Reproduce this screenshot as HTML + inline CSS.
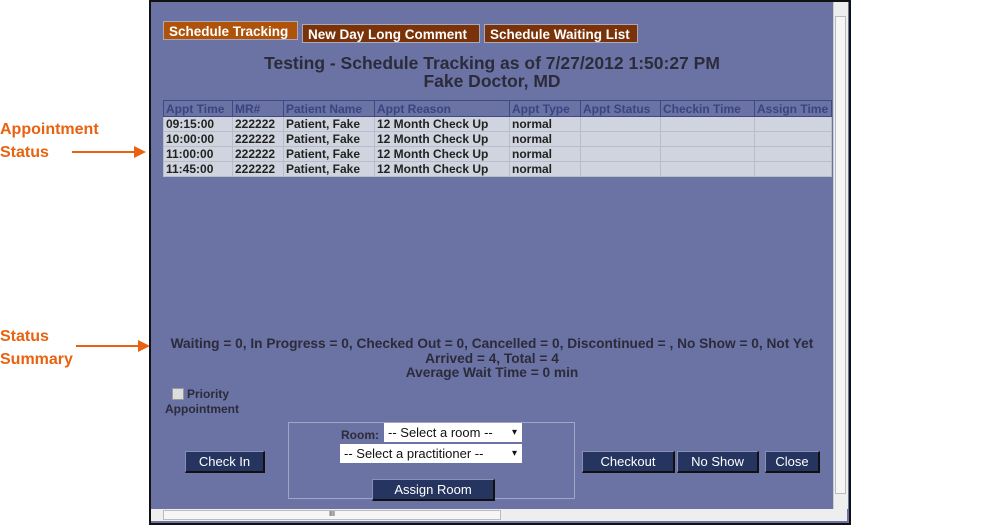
<html><head><style>
body{margin:0;width:1000px;height:525px;background:#fff;position:relative;overflow:hidden;font-family:"Liberation Sans",Arial,sans-serif}
.a{position:absolute}
.frame{left:149px;top:0;width:698px;height:521px;border:2px solid #111;background:#6b73a5;}
.lbl{color:#e8620f;font-size:16px;font-weight:bold;line-height:23px}
.tab{position:absolute;height:19px;color:#fff;font-weight:bold;font-size:13.5px;line-height:19px;padding:0 5px;border:1px solid #aab;box-sizing:border-box;white-space:nowrap}
table{border-collapse:collapse;font-size:12px;font-weight:bold}
td{border:1px solid #b8bccb;height:15px;padding:0 2px;color:#222;background:#d0d4de;white-space:nowrap}
th{border:1px solid #3e4a85;height:16px;padding:0 2px;color:#3a4480;background:#6b73a5;text-align:left;font-weight:bold;white-space:nowrap}
.btn{position:absolute;background:#26355f;color:#fff;font-size:13px;text-align:center;line-height:19px;height:19px;border-right:2px solid #111;border-bottom:2px solid #111;border-left:1px solid #8890b8;border-top:1px solid #8890b8}
.sel{position:absolute;background:#fff;font-size:13px;height:19px;line-height:19px;padding-left:4px;color:#111}
.sel:after{content:"▾";position:absolute;right:5px;font-size:10px}
</style></head><body>
<div class="a lbl" style="left:0;top:118px">Appointment<br>Status</div>
<div class="a" style="left:72px;top:151px;width:64px;height:2px;background:#e8620f"></div>
<div class="a" style="left:134px;top:146px;border-left:12px solid #e8620f;border-top:6px solid transparent;border-bottom:6px solid transparent"></div>
<div class="a lbl" style="left:0;top:325px">Status<br>Summary</div>
<div class="a" style="left:76px;top:345px;width:64px;height:2px;background:#e8620f"></div>
<div class="a" style="left:138px;top:340px;border-left:12px solid #e8620f;border-top:6px solid transparent;border-bottom:6px solid transparent"></div>
<div class="a frame"></div>
<div class="a" style="left:833px;top:2px;width:14px;height:507px;background:#eee;border-left:1px solid #ccc"></div>
<div class="a" style="left:835px;top:16px;width:11px;height:478px;background:#f6f6f6;border:1px solid #bbb;box-sizing:border-box"></div>
<div class="a" style="left:151px;top:509px;width:696px;height:12px;background:#eee"></div>
<div class="a" style="left:163px;top:510px;width:338px;height:10px;background:#f6f6f6;border:1px solid #bbb;box-sizing:border-box;font-size:7px;text-align:center;line-height:8px">III</div>
<div class="tab" style="left:163px;top:21px;width:135px;background:#b0530a">Schedule Tracking</div>
<div class="tab" style="left:302px;top:24px;width:178px;background:#7a3308">New Day Long Comment</div>
<div class="tab" style="left:484px;top:24px;width:154px;background:#7a3308">Schedule Waiting List</div>
<div class="a" style="left:151px;top:54px;width:682px;text-align:center;font-size:17.5px;font-weight:bold;color:#2b2b3a;line-height:18px">Testing - Schedule Tracking as of 7/27/2012 1:50:27 PM<br>Fake Doctor, MD</div>
<table class="a" style="left:163px;top:100px;width:669px">
<tr><th style="width:64px">Appt Time</th><th style="width:46px">MR#</th><th style="width:86px">Patient Name</th><th style="width:130px">Appt Reason</th><th style="width:66px">Appt Type</th><th style="width:75px">Appt Status</th><th style="width:89px">Checkin Time</th><th>Assign Time</th></tr>
<tr><td>09:15:00</td><td>222222</td><td>Patient, Fake</td><td>12 Month Check Up</td><td>normal</td><td></td><td></td><td></td></tr>
<tr><td>10:00:00</td><td>222222</td><td>Patient, Fake</td><td>12 Month Check Up</td><td>normal</td><td></td><td></td><td></td></tr>
<tr><td>11:00:00</td><td>222222</td><td>Patient, Fake</td><td>12 Month Check Up</td><td>normal</td><td></td><td></td><td></td></tr>
<tr><td>11:45:00</td><td>222222</td><td>Patient, Fake</td><td>12 Month Check Up</td><td>normal</td><td></td><td></td><td></td></tr>
</table>
<div class="a" style="left:151px;top:337px;width:682px;text-align:center;font-size:13.7px;font-weight:bold;color:#2b2b3a;line-height:14.5px;white-space:nowrap">Waiting = 0, In Progress = 0, Checked Out = 0, Cancelled = 0, Discontinued = , No Show = 0, Not Yet<br>Arrived = 4, Total = 4<br>Average Wait Time = 0 min</div>
<div class="a" style="left:172px;top:388px;width:10px;height:10px;background:#ddd;border:1px solid #999"></div>
<div class="a" style="left:187px;top:387px;font-size:12px;font-weight:bold;color:#2b2b3a;line-height:15px">Priority</div>
<div class="a" style="left:165px;top:402px;font-size:12px;font-weight:bold;color:#2b2b3a;line-height:15px">Appointment</div>
<div class="a" style="left:288px;top:422px;width:287px;height:77px;border:1px solid #a0a6c6;box-sizing:border-box"></div>
<div class="a" style="left:341px;top:428px;font-size:12px;font-weight:bold;color:#2b2b3a">Room:</div>
<div class="sel" style="left:384px;top:423px;width:134px">-- Select a room --</div>
<div class="sel" style="left:340px;top:444px;width:178px">-- Select a practitioner --</div>
<div class="btn" style="left:185px;top:451px;width:77px">Check In</div>
<div class="btn" style="left:372px;top:479px;width:120px">Assign Room</div>
<div class="btn" style="left:582px;top:451px;width:90px">Checkout</div>
<div class="btn" style="left:677px;top:451px;width:79px">No Show</div>
<div class="btn" style="left:765px;top:451px;width:52px">Close</div>
</body></html>
